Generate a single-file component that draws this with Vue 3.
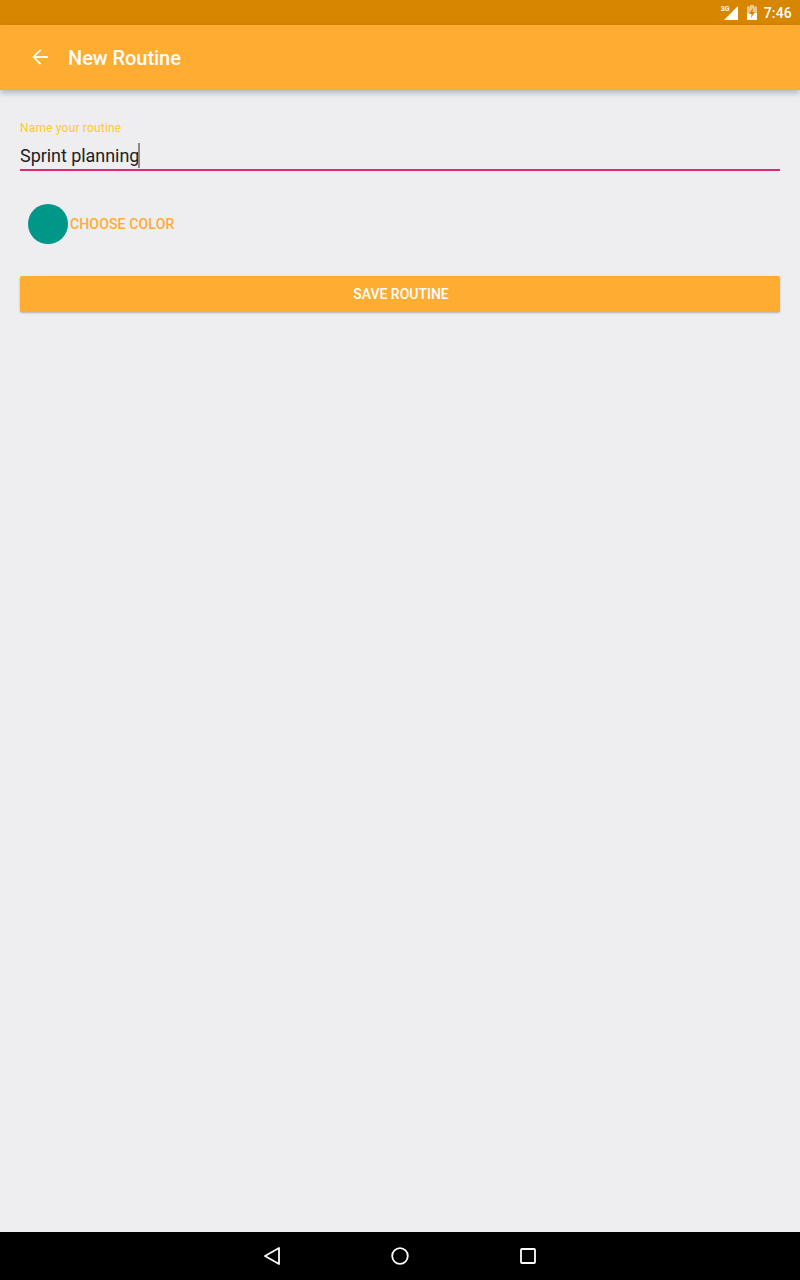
<script setup>
const title = 'New Routine'
</script>

<template>
  <div class="screen">
    <div class="status">
      <span class="net-wrap">
        <span class="net-label">3G</span>
        <svg class="signal" width="14" height="14" viewBox="0 0 14 14"><path d="M14 0V14H0Z" fill="#fff"/></svg>
      </span>
      <svg class="battery" width="10" height="15" viewBox="0 0 10 15">
        <path d="M3 0H7V1.5H10V15H0V1.5H3Z" fill="#fff" fill-opacity="0.55"/>
        <path d="M0 8H10V15H0Z" fill="#fff"/>
        <path d="M6 3L2 9H4.5L4 13L8 7H5.5Z" fill="#d68600"/>
      </svg>
      <span class="time">7:46</span>
    </div>
    <header class="toolbar">
      <svg class="back" width="24" height="24" viewBox="0 0 24 24"><path d="M20 11H7.6l5.6-5.6L12 4.3 4.3 12l7.7 7.7 1.2-1.1L7.6 13H20z" fill="#fff"/></svg>
      <span class="title">{{ title }}</span>
    </header>
    <main class="content">
      <label class="field">
        <span class="field-label">Name your routine</span>
        <span class="field-value">Sprint planning<i class="caret"></i></span>
      </label>
      <div class="color-row">
        <span class="swatch"></span>
        <span class="choose">CHOOSE COLOR</span>
      </div>
      <button class="save">SAVE ROUTINE</button>
    </main>
    <nav class="navbar">
      <span class="nav-cell"><svg width="18" height="20" viewBox="0 0 18 20"><path d="M16 2V18L2 10Z" fill="none" stroke="#fff" stroke-width="1.8" stroke-linejoin="round"/></svg></span>
      <span class="nav-cell"><svg width="18" height="18" viewBox="0 0 18 18"><circle cx="9" cy="9" r="7.8" fill="none" stroke="#fff" stroke-width="1.8"/></svg></span>
      <span class="nav-cell"><svg width="16" height="16" viewBox="0 0 16 16"><rect x="1" y="1" width="14" height="14" rx="1" fill="none" stroke="#fff" stroke-width="1.8"/></svg></span>
    </nav>
  </div>
</template>

<style>
html, body { margin: 0; padding: 0; }
</style>

<style scoped>
.screen {
  width: 800px;
  height: 1280px;
  display: flex;
  flex-direction: column;
  background: #eeeef0;
  font-family: Roboto, "Liberation Sans", sans-serif;
  overflow: hidden;
}
.status {
  height: 25px;
  flex: none;
  background: #d68600;
  display: flex;
  align-items: center;
  justify-content: flex-end;
  padding-right: 8px;
  color: #fff;
}
.net-wrap { position: relative; width: 17px; height: 15px; margin-right: 9px; margin-top: -1px; }
.net-label { position: absolute; left: 0; top: 0; font-size: 7px; font-weight: 700; line-height: 8px; }
.signal { position: absolute; right: 0; top: 1px; }
.battery { margin-right: 7px; margin-top: -1px; }
.time { font-size: 14px; font-weight: 500; line-height: 25px; letter-spacing: 0.2px; margin-top: 1px; }
.toolbar {
  height: 65px;
  flex: none;
  background: #ffac33;
  display: flex;
  align-items: center;
  padding-left: 28px;
  box-shadow: 0 3px 6px rgba(0, 0, 0, 0.24);
  position: relative;
}
.back { width: 24px; height: 24px; margin-right: 16px; margin-bottom: 2px; }
.title { color: #fff; font-size: 20px; font-weight: 500; letter-spacing: -0.05px; }
.content { flex: 1; padding: 0 20px; display: flex; flex-direction: column; }
.field { display: flex; flex-direction: column; margin-top: 31px; border-bottom: 2px solid #de2a70; height: 50px; box-sizing: border-box; }
.field-label { color: #ffc926; font-size: 12px; line-height: 14px; letter-spacing: 0.18px; }
.field-value { color: #212121; font-size: 18px; line-height: 21px; margin-top: 8px; letter-spacing: -0.05px; display: flex; align-items: center; }
.caret { width: 2px; height: 25px; background: #8a8a96; margin-left: -1px; }
.color-row { display: flex; align-items: center; height: 40px; margin-top: 33px; padding-left: 8px; }
.swatch { width: 40px; height: 40px; border-radius: 50%; background: #009688; }
.choose { margin-left: 2px; color: #ffac33; font-size: 14px; font-weight: 500; letter-spacing: 0.15px; }
.save {
  margin-top: 32px;
  height: 36px;
  border: 0;
  border-radius: 2px;
  padding: 0 0 0 2px;
  background: #ffac33;
  color: #fff;
  font-family: inherit;
  font-size: 14px;
  font-weight: 500;
  box-shadow: 0 1px 2px rgba(0, 0, 0, 0.26);
}
.navbar {
  height: 48px;
  flex: none;
  background: #000;
  display: flex;
  align-items: center;
  justify-content: center;
}
.nav-cell { width: 128px; display: flex; justify-content: center; }
</style>
